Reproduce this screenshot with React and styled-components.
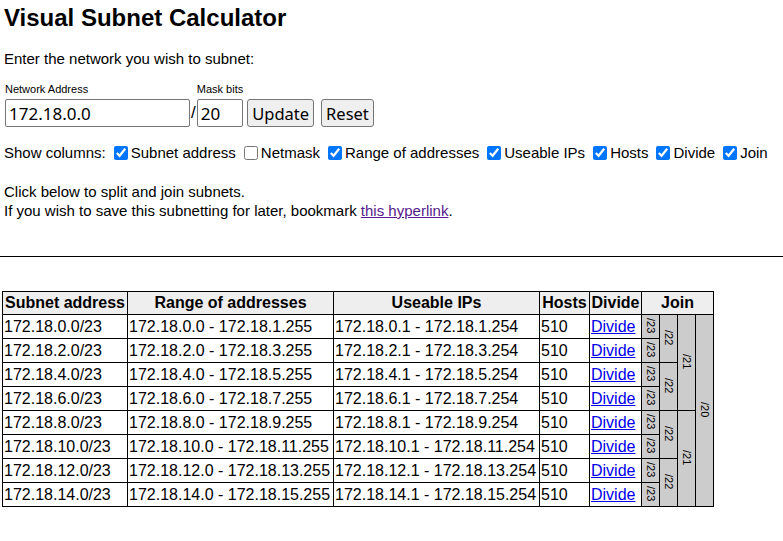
import React from 'react'
import styled, { createGlobalStyle } from 'styled-components'

const GlobalStyle = createGlobalStyle`
    body {
        margin: 0;
        background: #ffffff;
        color: #000000;
        font-family: "Liberation Sans", Arial, sans-serif;
        font-size: 15px;
    }
`

const Page = styled.div`
    padding: 0 4px;
`

const Title = styled.h1`
    font-size: 24px;
    font-weight: 700;
    margin: 4px 0 18px 0;
    line-height: 28px;
`

const Para = styled.p`
    margin: 0;
    line-height: 18px;
`

const Form = styled.div`
    display: flex;
    align-items: flex-end;
    margin-top: 14px;
`

const Field = styled.label`
    display: flex;
    flex-direction: column;
    gap: 3px;
    font-size: 11px;
    line-height: 14px;
    margin-left: ${props => props.offset || 0}px;
`

const TextInput = styled.input`
    box-sizing: border-box;
    font-family: "Noto Sans", sans-serif;
    font-size: 17px;
    height: 28px;
    width: ${props => props.w}px;
    padding: 0 3px;
    border: 1px solid #767676;
    border-radius: 2px;
    margin: 0;
`

const Slash = styled.span`
    font-size: 17px;
    line-height: 28px;
    padding: 0 1px;
`

const Button = styled.button`
    font-family: "Noto Sans", sans-serif;
    font-size: 16.5px;
    height: 28px;
    padding: 0 4px;
    margin-left: ${props => props.gap}px;
    border: 1px solid #767676;
    border-radius: 3px;
    background: #efefef;
    color: #000;
`

const Columns = styled.div`
    display: flex;
    align-items: center;
    margin-top: 17px;
    line-height: 18px;
`

const Check = styled.label`
    display: inline-flex;
    align-items: center;
    margin-left: 5px;

    input {
        margin: 0 3px 0 3px;
        width: 14px;
        height: 14px;
    }
`

const Notes = styled.div`
    margin-top: 20px;
    line-height: 19px;
`

const Visited = styled.a`
    color: #551a8b;
`

const Rule = styled.hr`
    border: 0;
    border-top: 1px solid #000;
    margin: 36px 0 34px 0;
`

const TableWrap = styled.div`
    padding-left: 2px;
`

const Table = styled.table`
    border-collapse: collapse;
    border: 1px solid #000;
    font-size: 16px;

    th, td {
        border: 1px solid #000;
        padding: 0 1px;
        height: 23px;
        white-space: nowrap;
    }
`

const Head = styled.th`
    background: #eeeeee;
    font-weight: 700;
    text-align: center;
    width: ${props => props.w}px;
    box-sizing: border-box;
`

const Cell = styled.td`
    text-align: left;
    padding-top: 2px;
`

const DivideLink = styled.a`
    color: #0000ee;
    text-decoration: underline;
`

const JoinCell = styled.td`
    background: #cccccc;
    font-size: 11px;
    text-align: center;
    vertical-align: middle;
    width: 15px;

    span {
        writing-mode: vertical-rl;
        display: inline-block;
        line-height: 15px;
    }
`

const rows = Array.from({ length: 8 }, (_, i) => {
    const a = i * 2
    return {
        subnet: `172.18.${a}.0/23`,
        range: `172.18.${a}.0 - 172.18.${a + 1}.255`,
        useable: `172.18.${a}.1 - 172.18.${a + 1}.254`,
        hosts: 510,
    }
})

// each row gets a /23; bigger blocks start every 2, 4, 8 rows
const joinCells = (i) => {
    const cells = [<JoinCell key="23"><span>/23</span></JoinCell>]
    if (i % 2 === 0) cells.push(<JoinCell key="22" rowSpan={2}><span>/22</span></JoinCell>)
    if (i % 4 === 0) cells.push(<JoinCell key="21" rowSpan={4}><span>/21</span></JoinCell>)
    if (i === 0) cells.push(<JoinCell key="20" rowSpan={8}><span>/20</span></JoinCell>)
    return cells
}

const columns = [
    ['Subnet address', true],
    ['Netmask', false],
    ['Range of addresses', true],
    ['Useable IPs', true],
    ['Hosts', true],
    ['Divide', true],
    ['Join', true],
]

export default function App() {
    return (
        <>
            <GlobalStyle />
            <Page>
                <Title>Visual Subnet Calculator</Title>
                <Para>Enter the network you wish to subnet:</Para>
                <Form>
                    <Field offset={1}>
                        Network Address
                        <TextInput w={185} defaultValue="172.18.0.0" />
                    </Field>
                    <Slash>/</Slash>
                    <Field>
                        Mask bits
                        <TextInput w={46} defaultValue="20" />
                    </Field>
                    <Button gap={4}>Update</Button>
                    <Button gap={7}>Reset</Button>
                </Form>
                <Columns>
                    Show columns:
                    {columns.map(([name, on]) => (
                        <Check key={name}>
                            <input type="checkbox" defaultChecked={on} />
                            {name}
                        </Check>
                    ))}
                </Columns>
                <Notes>
                    Click below to split and join subnets.<br />
                    If you wish to save this subnetting for later, bookmark <Visited href="#">this hyperlink</Visited>.
                </Notes>
            </Page>
            <Rule />
            <TableWrap>
                <Table>
                    <thead>
                        <tr>
                            <Head w={125}>Subnet address</Head>
                            <Head w={206}>Range of addresses</Head>
                            <Head w={206}>Useable IPs</Head>
                            <Head w={50}>Hosts</Head>
                            <Head w={52}>Divide</Head>
                            <Head colSpan={4}>Join</Head>
                        </tr>
                    </thead>
                    <tbody>
                        {rows.map((r, i) => (
                            <tr key={r.subnet}>
                                <Cell>{r.subnet}</Cell>
                                <Cell>{r.range}</Cell>
                                <Cell>{r.useable}</Cell>
                                <Cell>{r.hosts}</Cell>
                                <Cell><DivideLink href="#">Divide</DivideLink></Cell>
                                {joinCells(i)}
                            </tr>
                        ))}
                    </tbody>
                </Table>
            </TableWrap>
        </>
    )
}
